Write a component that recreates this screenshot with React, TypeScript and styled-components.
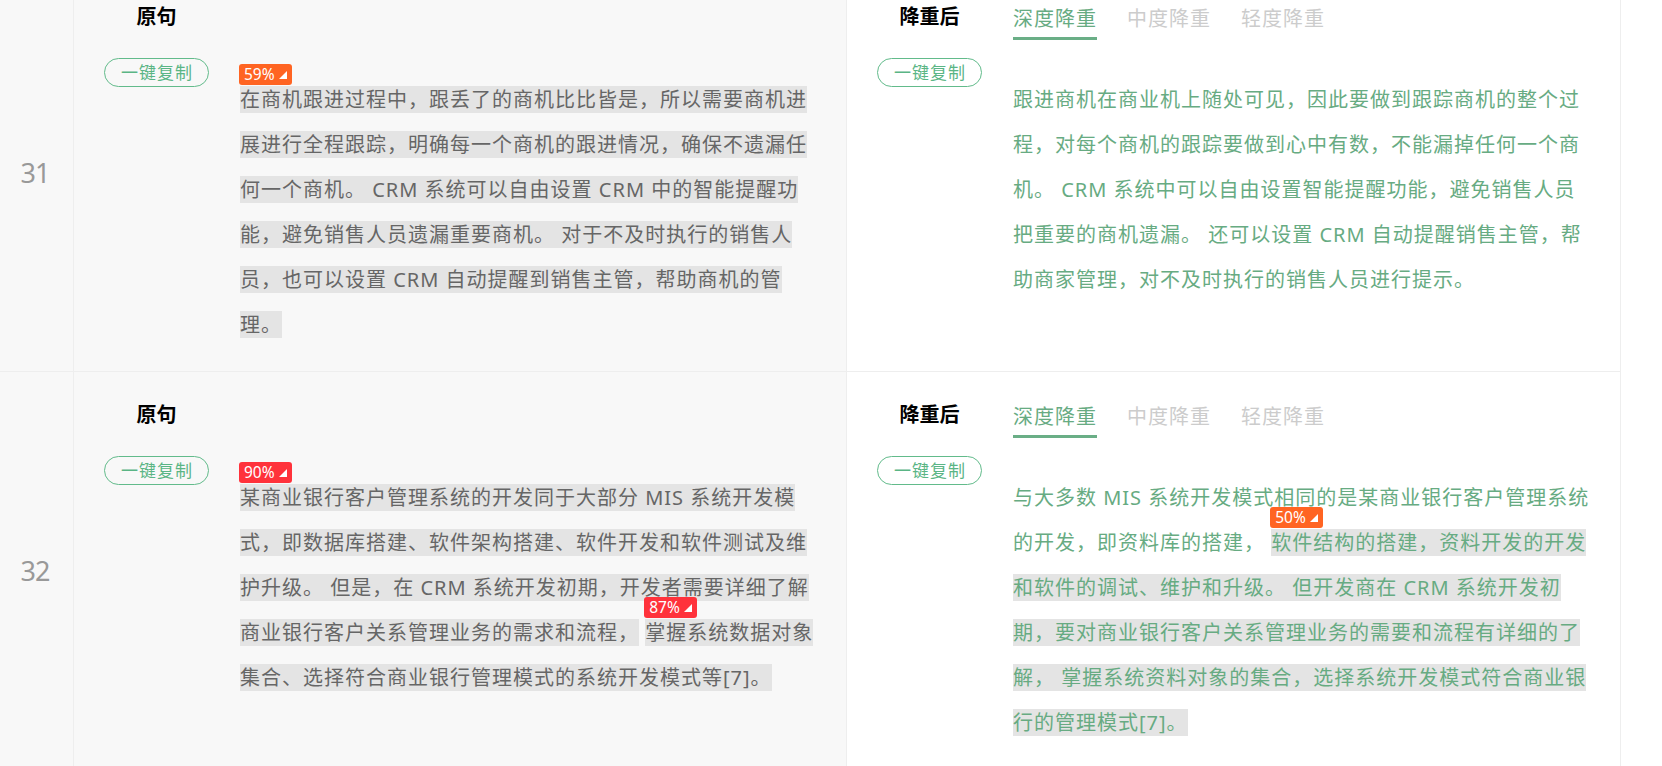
import React from "react";
import styled, { createGlobalStyle } from "styled-components";

const GlobalStyle = createGlobalStyle`
  *, *::before, *::after { box-sizing: border-box; }
  html, body { margin: 0; padding: 0; background: #fff; }
  body {
    font-family: "Noto Sans", "Noto Sans CJK SC", sans-serif;
    overflow: hidden;
  }
`;

const GREEN = "#67ab82";

const Page = styled.div`
  width: 1662px;
  height: 766px;
  overflow: hidden;
  background: #fff;
`;

const List = styled.div`
  width: 1621px;
  margin-top: -26px;
`;

const Row = styled.div`
  display: grid;
  grid-template-columns: 74px 773px 774px;
  border-bottom: 1px solid #eee;
`;

const Index = styled.div`
  display: flex;
  align-items: center;
  justify-content: center;
  border-right: 1px solid #eee;
  background: #f8f8f8;
  font-size: 27px;
  letter-spacing: -1px;
  color: #999;
  padding-right: 3px;
`;

const Half = styled.div<{ $white?: boolean }>`
  border-right: 1px solid #eee;
  background: ${(p) => (p.$white ? "#fff" : "#f8f8f8")};
  padding: 28px 0 24px;
`;

const Head = styled.div`
  display: grid;
  grid-template-columns: 166px 1fr;
  align-items: start;
  height: 38px;
`;

const Side = styled.div`
  padding: 0 31px 0 30px;
  display: flex;
  justify-content: center;
  align-items: flex-start;
`;

const Title = styled.div`
  font-size: 20px;
  font-weight: 700;
  line-height: 30px;
  color: #000;
  white-space: nowrap;
`;

const Tabs = styled.div`
  display: flex;
  gap: 30px;
`;

const Tab = styled.div<{ $active?: boolean }>`
  font-size: 20px;
  letter-spacing: 1px;
  line-height: 30px;
  padding: 2px 0 3px;
  color: ${(p) => (p.$active ? GREEN : "#ccc")};
  border-bottom: 3px solid ${(p) => (p.$active ? "#6aae86" : "transparent")};
  cursor: pointer;
`;

const Body = styled.div`
  display: grid;
  grid-template-columns: 166px 1fr;
  margin-top: 18px;
`;

const CopyButton = styled.button`
  width: 105px;
  height: 29px;
  padding: 0 0 0 1px;
  border: 1px solid #62bb8b;
  border-radius: 15px;
  background: transparent;
  color: #5ab585;
  font-family: inherit;
  font-size: 17px;
  letter-spacing: 1px;
  line-height: 27px;
  cursor: pointer;
`;

const Text = styled.div<{ $green?: boolean }>`
  padding-top: 19px;
  max-width: 579px;
  font-size: 20px;
  letter-spacing: 1px;
  line-height: 45px;
  color: ${(p) => (p.$green ? GREEN : "#666")};
`;

const Mark = styled.span`
  position: relative;
  background: #e4e4e4;
`;

const Badge = styled.span<{ $level: "high" | "mid" }>`
  position: absolute;
  left: -1px;
  bottom: calc(100% + 1px);
  display: inline-flex;
  align-items: center;
  gap: 4px;
  height: 21px;
  padding: 0 5px 0 5px;
  border-radius: 3px;
  background: ${(p) => (p.$level === "high" ? "#ff323b" : "#ff6422")};
  color: #fff;
  font-size: 15.5px;
  line-height: 21px;
  letter-spacing: 0;
  white-space: nowrap;
`;

function Rate({ value }: { value: number }) {
  return (
    <Badge $level={value >= 80 ? "high" : "mid"}>
      {value}%
      <svg width="8" height="8" viewBox="0 0 8 8">
        <polygon points="0,8 8,8 8,0" fill="#fff" />
      </svg>
    </Badge>
  );
}

function Original({ children }: { children: React.ReactNode }) {
  return (
    <Half>
      <Head>
        <Side>
          <Title>原句</Title>
        </Side>
      </Head>
      <Body>
        <Side>
          <CopyButton>一键复制</CopyButton>
        </Side>
        <Text>{children}</Text>
      </Body>
    </Half>
  );
}

function Rewritten({ children }: { children: React.ReactNode }) {
  return (
    <Half $white>
      <Head>
        <Side>
          <Title>降重后</Title>
        </Side>
        <Tabs>
          <Tab $active>深度降重</Tab>
          <Tab>中度降重</Tab>
          <Tab>轻度降重</Tab>
        </Tabs>
      </Head>
      <Body>
        <Side>
          <CopyButton>一键复制</CopyButton>
        </Side>
        <Text $green>{children}</Text>
      </Body>
    </Half>
  );
}

export default function App() {
  return (
    <Page>
      <GlobalStyle />
      <List>
        <Row>
          <Index>31</Index>
          <Original>
            <Mark>
              <Rate value={59} />
              在商机跟进过程中，跟丢了的商机比比皆是，所以需要商机进展进行全程跟踪，明确每一个商机的跟进情况，确保不遗漏任何一个商机。 CRM 系统可以自由设置 CRM 中的智能提醒功能，避免销售人员遗漏重要商机。 对于不及时执行的销售人员，也可以设置 CRM 自动提醒到销售主管，帮助商机的管理。
            </Mark>
          </Original>
          <Rewritten>
            跟进商机在商业机上随处可见，因此要做到跟踪商机的整个过程，对每个商机的跟踪要做到心中有数，不能漏掉任何一个商机。 CRM 系统中可以自由设置智能提醒功能，避免销售人员把重要的商机遗漏。 还可以设置 CRM 自动提醒销售主管，帮助商家管理，对不及时执行的销售人员进行提示。
          </Rewritten>
        </Row>
        <Row>
          <Index>32</Index>
          <Original>
            <Mark>
              <Rate value={90} />
              某商业银行客户管理系统的开发同于大部分 MIS 系统开发模式，即数据库搭建、软件架构搭建、软件开发和软件测试及维护升级。 但是，在 CRM 系统开发初期，开发者需要详细了解商业银行客户关系管理业务的需求和流程，
            </Mark>{" "}
            <Mark>
              <Rate value={87} />
              掌握系统数据对象集合、选择符合商业银行管理模式的系统开发模式等[7]。
            </Mark>
          </Original>
          <Rewritten>
            与大多数 MIS 系统开发模式相同的是某商业银行客户管理系统的开发，即资料库的搭建，{" "}
            <Mark>
              <Rate value={50} />
              软件结构的搭建，资料开发的开发和软件的调试、维护和升级。 但开发商在 CRM 系统开发初期，要对商业银行客户关系管理业务的需要和流程有详细的了解， 掌握系统资料对象的集合，选择系统开发模式符合商业银行的管理模式[7]。
            </Mark>
          </Rewritten>
        </Row>
      </List>
    </Page>
  );
}
